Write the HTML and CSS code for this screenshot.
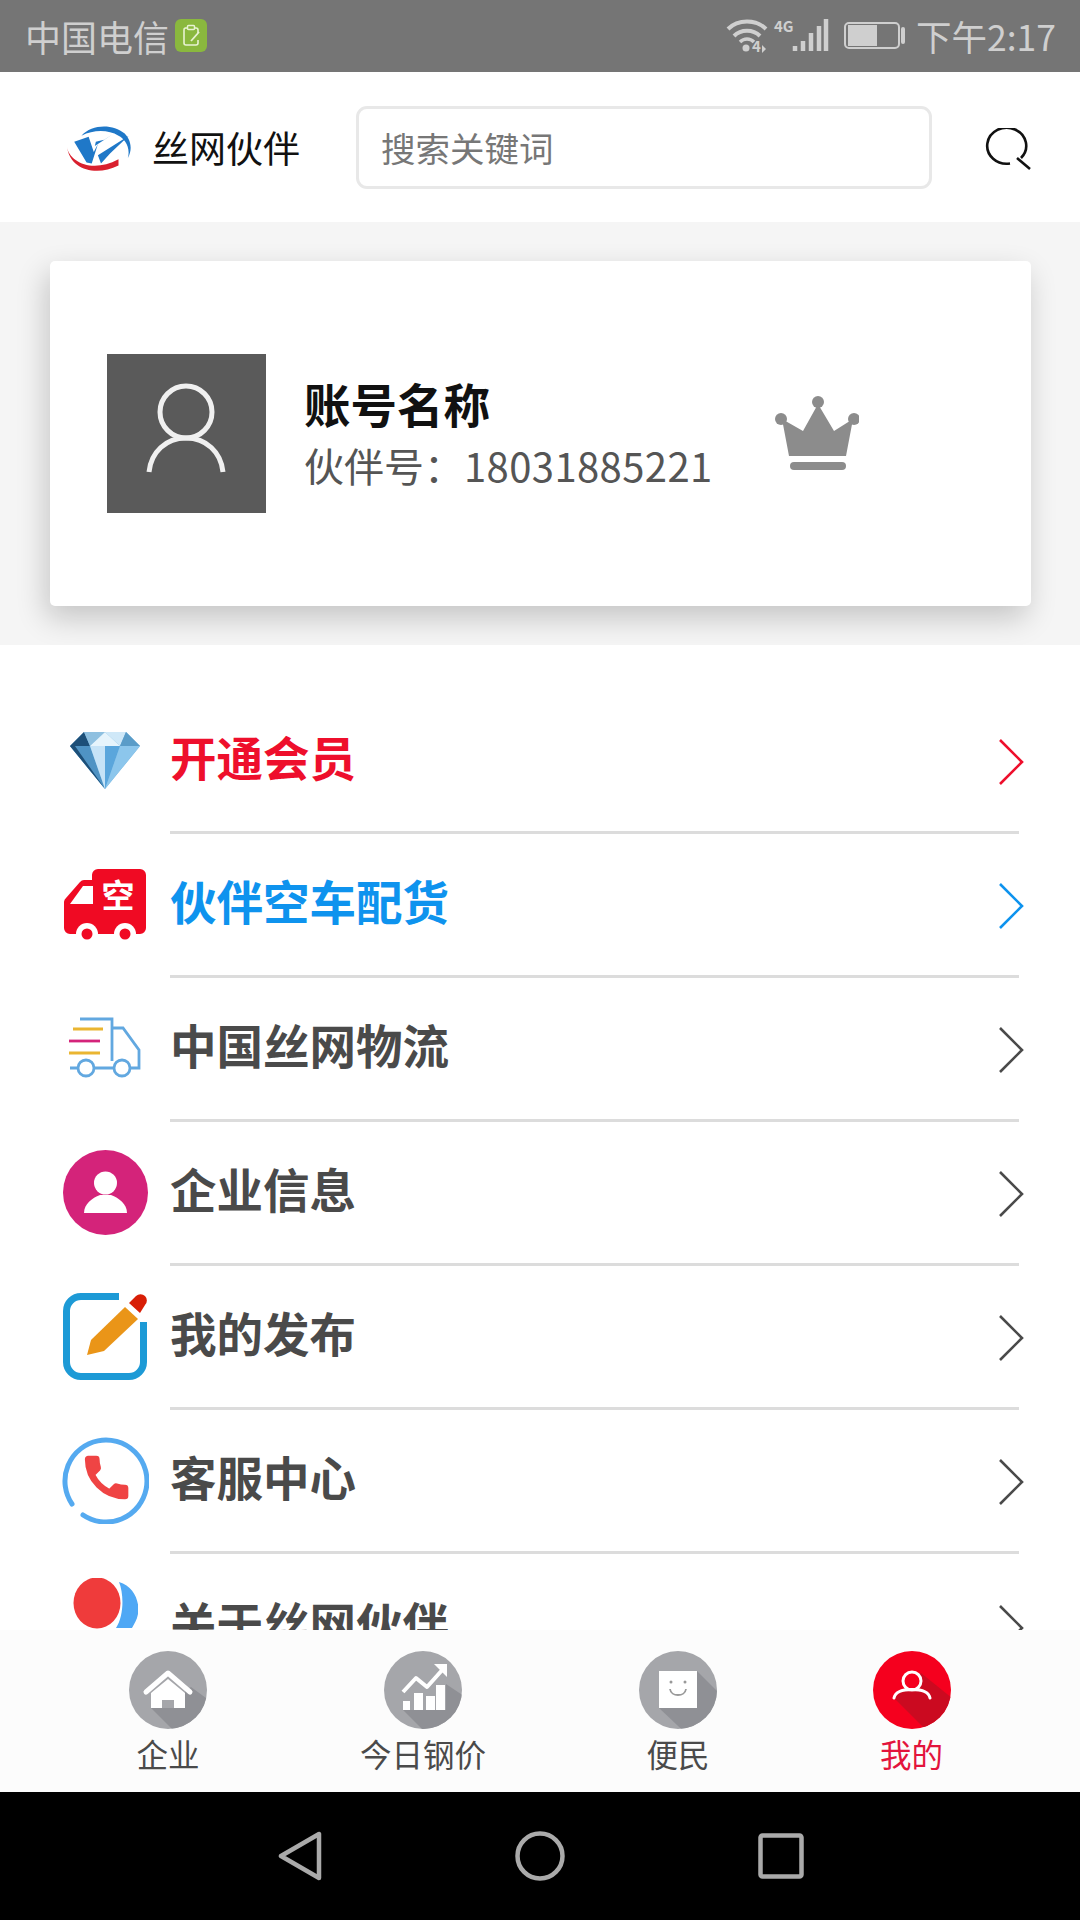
FILE: index.html
```html
<!DOCTYPE html>
<html lang="zh-CN">
<head>
<meta charset="utf-8">
<title>丝网伙伴</title>
<link rel="stylesheet" href="styles.css">
</head>
<body>
<div class="app">
  <div class="status">
    <div class="status-left">
      <span>中国电信</span>
      <svg class="badge" width="32" height="33" viewBox="0 0 32 33"><rect width="32" height="33" rx="6" fill="#8ab83e"/><path d="M10 9h2M20 9h1a2 2 0 0 1 2 2v3M23 21v3a2 2 0 0 1-2 2H11a2 2 0 0 1-2-2V11a2 2 0 0 1 1-2" fill="none" stroke="#e8f2d2" stroke-width="1.6"/><rect x="12.500" y="6.500" width="7" height="4" rx="1" fill="none" stroke="#e8f2d2" stroke-width="1.500"/><path d="M16 22l8-9" stroke="#e8f2d2" stroke-width="1.800"/></svg>
    </div>
    <div class="status-right">
      <svg width="179" height="56" viewBox="0 -10 179 56" fill="none" stroke="#cfcfcf">
        <path d="M2 11C12 1 30 1 40 11" stroke-width="4"/>
        <path d="M8 18C15 11 27 11 34 18" stroke-width="4"/>
        <path d="M14 24C18 20 24 20 28 24" stroke-width="3.500"/>
        <circle cx="20" cy="30" r="3.500" fill="#cfcfcf" stroke="none"/>
        <text class="tiny" x="26" y="34">4</text>
        <path d="M36 27v8l4-4z" fill="#cfcfcf" stroke="none"/>
        <text class="tiny" x="48" y="14">4G</text>
        <path d="M69 33v-5M77 33V23M85 33V15M93 33V8M100 33V1" stroke-width="4.500"/>
        <rect x="119" y="5" width="54" height="25" rx="4" stroke-width="2"/>
        <rect x="122" y="7" width="29" height="21" fill="#cfcfcf" stroke="none"/>
        <rect x="175" y="9" width="4" height="17" rx="2" fill="#cfcfcf" stroke="none"/>
      </svg>
      <span class="clock">下午2:17</span>
    </div>
  </div>

  <header class="top">
    <svg class="logo" width="68" height="48" viewBox="0 0 66 46">
      <path d="M0 22C2 36 24 48 50 34L50 40C28 51 3 44 0 22Z" fill="#d9202e"/>
      <path d="M14 11C24 0 44-1 56 9 60 13 65 22 59 33 62 22 56 14 50 11 40 5 26 5 14 11Z" fill="#1f78c8"/>
      <path d="M7 17L21 12 26 27 30 19 24 38 19 37Z" fill="#1f78c8"/>
      <path d="M27 21L44 10 36 15 28 17ZM30 30L60 11 42 28 33 38Z" fill="#1f78c8"/>
    </svg>
    <span class="brand">丝网伙伴</span>
    <div class="search">搜索关键词</div>
    <svg class="search-icon" width="48" height="42" viewBox="0 0 48 42" fill="none" stroke="#111" stroke-width="2.600">
      <path d="M37 30A19.500 18 0 1 0 26 35.500"/>
      <path d="M33 30L46 41"/>
    </svg>
  </header>

  <section class="band">
    <div class="card">
      <div class="avatar">
        <svg width="159" height="159" viewBox="0 0 159 159" fill="none" stroke="#f0f0f0" stroke-width="5">
          <ellipse cx="79" cy="58" rx="26" ry="26"/>
          <path d="M42 118C44 98 59 84 79 84S114 98 116 118"/>
        </svg>
      </div>
      <div class="account">
        <div class="account-name">账号名称</div>
        <div class="account-id">伙伴号：<span class="digits">18031885221</span></div>
      </div>
      <svg class="crown" width="84" height="74" viewBox="0 0 84 74" fill="#8c8c8c">
        <circle cx="43" cy="6" r="6"/><circle cx="6" cy="23" r="6"/><circle cx="79" cy="23" r="6"/>
        <path d="M43 8L59 35 78 23 71 60H14L7 23 28 35Z"/>
        <rect x="15" y="66" width="56" height="8" rx="4"/>
      </svg>
    </div>
  </section>

  <main class="menu">
    <a class="row red">
      <span class="cell">
        <svg width="70" height="57" viewBox="0 0 70 57">
          <path d="M0 14L14 0H56L70 14 35 57Z" fill="#6aafdc"/>
          <path d="M0 14L14 0 20 14Z" fill="#1d4f78"/>
          <path d="M14 0H35L20 14Z" fill="#8fc0e0"/>
          <path d="M35 0H56L50 14Z" fill="#cfe8f8"/>
          <path d="M35 0L50 14H20Z" fill="#e6f4fc"/>
          <path d="M56 0L70 14H50Z" fill="#5a9cc8"/>
          <path d="M0 14H20L35 57Z" fill="#4f93c4"/>
          <path d="M0 14H5L35 57Z" fill="#1d4f78"/>
          <path d="M20 14H35V57Z" fill="#c6e3f7"/>
          <path d="M35 14H50L35 57Z" fill="#5aa6dc"/>
          <path d="M50 14H70L35 57Z" fill="#8cc6ec"/>
        </svg>
      </span>
      <span class="body"><b>开通会员</b><svg class="chev" width="26" height="48" viewBox="0 0 26 48"><path d="M2 2L24 24 2 46"/></svg></span>
    </a>
    <a class="row blue">
      <span class="cell">
        <svg width="82" height="71" viewBox="0 0 82 71">
          <path d="M28 6a6 6 0 0 1 6-6h42a6 6 0 0 1 6 6v53a6 6 0 0 1-6 6H6a6 6 0 0 1-6-6V34a6 6 0 0 1 2-5L16 13a6 6 0 0 1 4-2h8z" fill="#f00a23"/>
          <path d="M6 35L19 17h10v18z" fill="#fff"/>
          <text class="truck-text" x="54" y="39">空</text>
          <circle cx="23" cy="65" r="11" fill="#fff"/><circle cx="61" cy="65" r="11" fill="#fff"/>
          <circle cx="23" cy="65" r="5.500" fill="#f00a23"/><circle cx="61" cy="65" r="5.500" fill="#f00a23"/>
        </svg>
      </span>
      <span class="body"><b>伙伴空车配货</b><svg class="chev" width="26" height="48" viewBox="0 0 26 48"><path d="M2 2L24 24 2 46"/></svg></span>
    </a>
    <a class="row">
      <span class="cell">
        <svg width="74" height="62" viewBox="0 0 74 62" fill="none" stroke-width="2.800">
          <path d="M12 2H44V44M44 11H55L71 33V51H62M45 51H27M10 51H2" stroke="#62a8e0"/>
          <circle cx="18" cy="51" r="8" stroke="#62a8e0"/><circle cx="54" cy="51" r="8" stroke="#62a8e0"/>
          <path d="M5 12H35M1 36H32" stroke="#eab531"/>
          <path d="M1 24H32" stroke="#d4237a"/>
        </svg>
      </span>
      <span class="body"><b>中国丝网物流</b><svg class="chev" width="26" height="48" viewBox="0 0 26 48"><path d="M2 2L24 24 2 46"/></svg></span>
    </a>
    <a class="row">
      <span class="cell">
        <svg width="85" height="85" viewBox="0 0 85 85">
          <circle cx="42.500" cy="42.500" r="42.500" fill="#d4237a"/>
          <circle cx="42.500" cy="33" r="11.500" fill="#fff"/>
          <path d="M21 63C21 54 29 48 37 45H48C56 48 64 54 64 63Z" fill="#fff"/>
        </svg>
      </span>
      <span class="body"><b>企业信息</b><svg class="chev" width="26" height="48" viewBox="0 0 26 48"><path d="M2 2L24 24 2 46"/></svg></span>
    </a>
    <a class="row">
      <span class="cell">
        <svg width="84" height="87" viewBox="0 0 84 87">
          <path d="M56 3.500H18A14.500 14.500 0 0 0 3.500 18V69A14.500 14.500 0 0 0 18 83.500H66A14.500 14.500 0 0 0 80.500 69V29" fill="none" stroke="#1d9ad6" stroke-width="7"/>
          <path d="M24 62L28 47 62 14 75 26 41 58Z" fill="#ea9518"/>
          <path d="M66 10L73 3A6 6 0 0 1 82 12L77 20Z" fill="#d81e06"/>
        </svg>
      </span>
      <span class="body"><b>我的发布</b><svg class="chev" width="26" height="48" viewBox="0 0 26 48"><path d="M2 2L24 24 2 46"/></svg></span>
    </a>
    <a class="row">
      <span class="cell">
        <svg width="87" height="87" viewBox="0 0 87 87">
          <path d="M21 78A41 41 0 1 0 10 67" fill="none" stroke="#55aaf0" stroke-width="5" stroke-linecap="round"/>
          <path transform="translate(17 13) scale(2.300)" stroke="#ef4444" stroke-width="0.900" d="M6.620 10.790c1.440 2.830 3.760 5.140 6.590 6.590l2.200-2.200c.27-.27.67-.36 1.020-.24 1.120.37 2.330.57 3.570.57.55 0 1 .45 1 1V20c0 .55-.45 1-1 1-9.390 0-17-7.610-17-17 0-.55.45-1 1-1h3.500c.55 0 1 .45 1 1 0 1.250.2 2.450.57 3.570.11.35.03.74-.25 1.020l-2.200 2.200z" fill="#ef4444"/>
        </svg>
      </span>
      <span class="body"><b>客服中心</b><svg class="chev" width="26" height="48" viewBox="0 0 26 48"><path d="M2 2L24 24 2 46"/></svg></span>
    </a>
    <a class="row">
      <span class="cell">
        <svg width="66" height="92" viewBox="0 0 66 92">
          <path d="M47 4C62 8 68 24 66 36 65 42 62 46 60 50H44C52 38 52 16 47 4Z" fill="#4fa8f5"/>
          <ellipse cx="25" cy="25" rx="23.500" ry="25.500" fill="#ef3b3b"/>
        </svg>
      </span>
      <span class="body last"><b>关于丝网伙伴</b><svg class="chev" width="26" height="48" viewBox="0 0 26 48"><path d="M2 2L24 24 2 46"/></svg></span>
    </a>
  </main>

  <nav class="tabs">
    <div class="tab">
      <svg width="78" height="78" viewBox="0 0 78 78">
        <clipPath id="c1"><circle cx="39" cy="39" r="39"/></clipPath>
        <g clip-path="url(#c1)">
          <rect width="78" height="78" fill="#a5a6aa"/>
          <path d="M22 57L55 90H95V60L62 36 56 40V57Z" fill="#8f9095"/>
        </g>
        <path d="M17 41L39 22 61 41" fill="none" stroke="#fff" stroke-width="5" stroke-linecap="round" stroke-linejoin="round"/>
        <path d="M22 42L39 28 56 42V57H45V49H33V57H22Z" fill="#fff"/>
      </svg>
      <span>企业</span>
    </div>
    <div class="tab">
      <svg width="78" height="78" viewBox="0 0 78 78">
        <clipPath id="c2"><circle cx="39" cy="39" r="39"/></clipPath>
        <g clip-path="url(#c2)">
          <rect width="78" height="78" fill="#a5a6aa"/>
          <path d="M19 59L50 90H95V55L62 33V59Z" fill="#8f9095"/>
        </g>
        <path d="M19 50h7v9h-7zM30 42h9v17h-9zM42 45h9v14h-9zM52 34h9v25h-9z" fill="#fff"/>
        <path d="M19 41L32 27 43 36 60 17" fill="none" stroke="#fff" stroke-width="4" stroke-linejoin="round"/>
        <path d="M50 13H63V26Z" fill="#fff"/>
      </svg>
      <span>今日钢价</span>
    </div>
    <div class="tab">
      <svg width="78" height="78" viewBox="0 0 78 78">
        <clipPath id="c3"><circle cx="39" cy="39" r="39"/></clipPath>
        <g clip-path="url(#c3)">
          <rect width="78" height="78" fill="#a5a6aa"/>
          <path d="M58 20L95 57V90H55L20 57Z" fill="#8f9095"/>
        </g>
        <rect x="20" y="20" width="38" height="37" fill="#fff"/>
        <circle cx="32" cy="31" r="1.500" fill="#999"/><circle cx="46" cy="31" r="1.500" fill="#999"/>
        <path d="M31 38C32 46 46 46 47 38" fill="none" stroke="#999" stroke-width="1.800"/>
      </svg>
      <span>便民</span>
    </div>
    <div class="tab active">
      <svg width="78" height="78" viewBox="0 0 78 78">
        <clipPath id="c4"><circle cx="39" cy="39" r="39"/></clipPath>
        <g clip-path="url(#c4)">
          <rect width="78" height="78" fill="#f5001e"/>
          <path d="M21 47L64 90H95V60L48 22 30 38Z" fill="#cb0a20"/>
        </g>
        <circle cx="39" cy="30" r="9" fill="#f5001e" stroke="#fff" stroke-width="3"/>
        <path d="M21 47C22 42 28 38.500 39 38.500S56 42 57 47" fill="none" stroke="#fff" stroke-width="3" stroke-linecap="round"/>
      </svg>
      <span>我的</span>
    </div>
  </nav>

  <footer class="sysnav">
    <svg width="44" height="50" viewBox="0 0 44 50" fill="none" stroke="#aaa" stroke-width="4.500" stroke-linejoin="round"><path d="M3 25L41 3V47Z"/></svg>
    <svg width="50" height="50" viewBox="0 0 50 50" fill="none" stroke="#aaa" stroke-width="4.500"><circle cx="25" cy="25" r="22.500"/></svg>
    <svg width="46" height="46" viewBox="0 0 46 46" fill="none" stroke="#aaa" stroke-width="4.500" stroke-linejoin="round"><rect x="2.500" y="2.500" width="41" height="41" rx="2"/></svg>
  </footer>
</div>
</body>
</html>
```

FILE: styles.css
```css
* { box-sizing: border-box; }
html, body { margin: 0; padding: 0; }
body {
  width: 1080px;
  height: 1920px;
  overflow: hidden;
  background: #fff;
  font-family: "Noto Sans CJK SC", "Noto Sans", sans-serif;
}
.app { display: flex; flex-direction: column; height: 1920px; }

.status {
  height: 72px;
  flex: none;
  background: #757575;
  color: #cfcfcf;
  font-size: 36px;
  line-height: 70px;
  display: flex;
  justify-content: space-between;
  align-items: center;
  padding: 0 24px 0 25px;
}
.status-left { display: flex; align-items: center; gap: 6px; }
.status-right { display: flex; align-items: center; gap: 11px; }
.clock { font-size: 35.500px; }
.tiny { font-size: 15px; font-weight: 700; fill: #cfcfcf; stroke: none; }
.badge { margin-top: -2px; }

.top {
  height: 150px;
  flex: none;
  display: flex;
  align-items: center;
  padding-left: 67px;
  background: #fff;
}
.logo { margin-right: 17px; margin-top: 1px; }
.brand { font-size: 37px; color: #111; width: 150px; white-space: nowrap; }
.search {
  width: 576px;
  height: 83px;
  margin-left: 54px;
  margin-right: 52px;
  border: 3px solid #e8e8e8;
  border-radius: 11px;
  padding-left: 22px;
  font-size: 34.500px;
  line-height: 77px;
  color: #777;
}
.search-icon { margin-top: 4px; }

.band {
  height: 423px;
  flex: none;
  background: #f5f5f5;
  padding: 39px 49px 39px 50px;
  overflow: hidden;
}
.card {
  height: 345px;
  background: #fff;
  border-radius: 5px;
  box-shadow: -4px 12px 30px rgba(0, 0, 0, 0.2);
  display: flex;
  align-items: center;
  padding-left: 57px;
}
.avatar {
  width: 159px;
  height: 159px;
  background: #5a5a5a;
  margin-right: 38px;
  flex: none;
}
.avatar svg { display: block; }
.account { width: 471px; }
.account-name { font-size: 46.500px; font-weight: 700; line-height: 62px; color: #111; }
.account-id { font-size: 40px; line-height: 62px; color: #555; white-space: nowrap; }
.digits { letter-spacing: 0.400px; }
.crown { margin-top: -2px; flex: none; }

.menu {
  flex: 1;
  min-height: 0;
  overflow: hidden;
  padding-top: 45px;
  background: #fff;
}
.row { display: flex; height: 144px; color: #4a4a4a; }
.cell {
  width: 170px;
  flex: none;
  padding: 0 0 4px 40px;
  display: flex;
  align-items: center;
  justify-content: center;
}
.cell svg { display: block; flex: none; }
.body {
  flex: 1;
  margin-right: 61px;
  border-bottom: 3px solid #dcdcdc;
  display: flex;
  align-items: center;
  justify-content: space-between;
  padding-bottom: 9px;
}
.body.last { padding-bottom: 6px; }
.body b { font-size: 46.500px; font-weight: 700; line-height: 60px; }
.chev { margin-right: -5px; fill: none; stroke: currentColor; stroke-width: 2.600; margin-top: 12px; }
.red { color: #ee0f2c; }
.blue { color: #0e93ee; }
.truck-text { font-size: 33px; font-weight: 700; fill: #fff; text-anchor: middle; }

.tabs {
  height: 162px;
  flex: none;
  background: #fcfcfc;
  padding: 21px 0 0 40.500px;
  display: grid;
  grid-template-columns: 255px 255px 255px 212px;
  position: relative;
}
.tab { display: flex; flex-direction: column; align-items: center; color: #4a4a4a; }
.tab svg { display: block; flex: none; }
.tab span { font-size: 31.500px; line-height: 42px; margin-top: 3px; white-space: nowrap; }
.tab.active span { color: #e3143c; }

.sysnav {
  height: 128px;
  flex: none;
  background: #000;
  position: relative;
  display: grid;
  grid-template-columns: 278px 44px 193px 50px 193px 46px;
  align-items: center;
}
.sysnav svg { display: block; grid-row: 1; }
.sysnav svg:nth-child(1) { grid-column: 2; }
.sysnav svg:nth-child(2) { grid-column: 4; }
.sysnav svg:nth-child(3) { grid-column: 6; }
```
